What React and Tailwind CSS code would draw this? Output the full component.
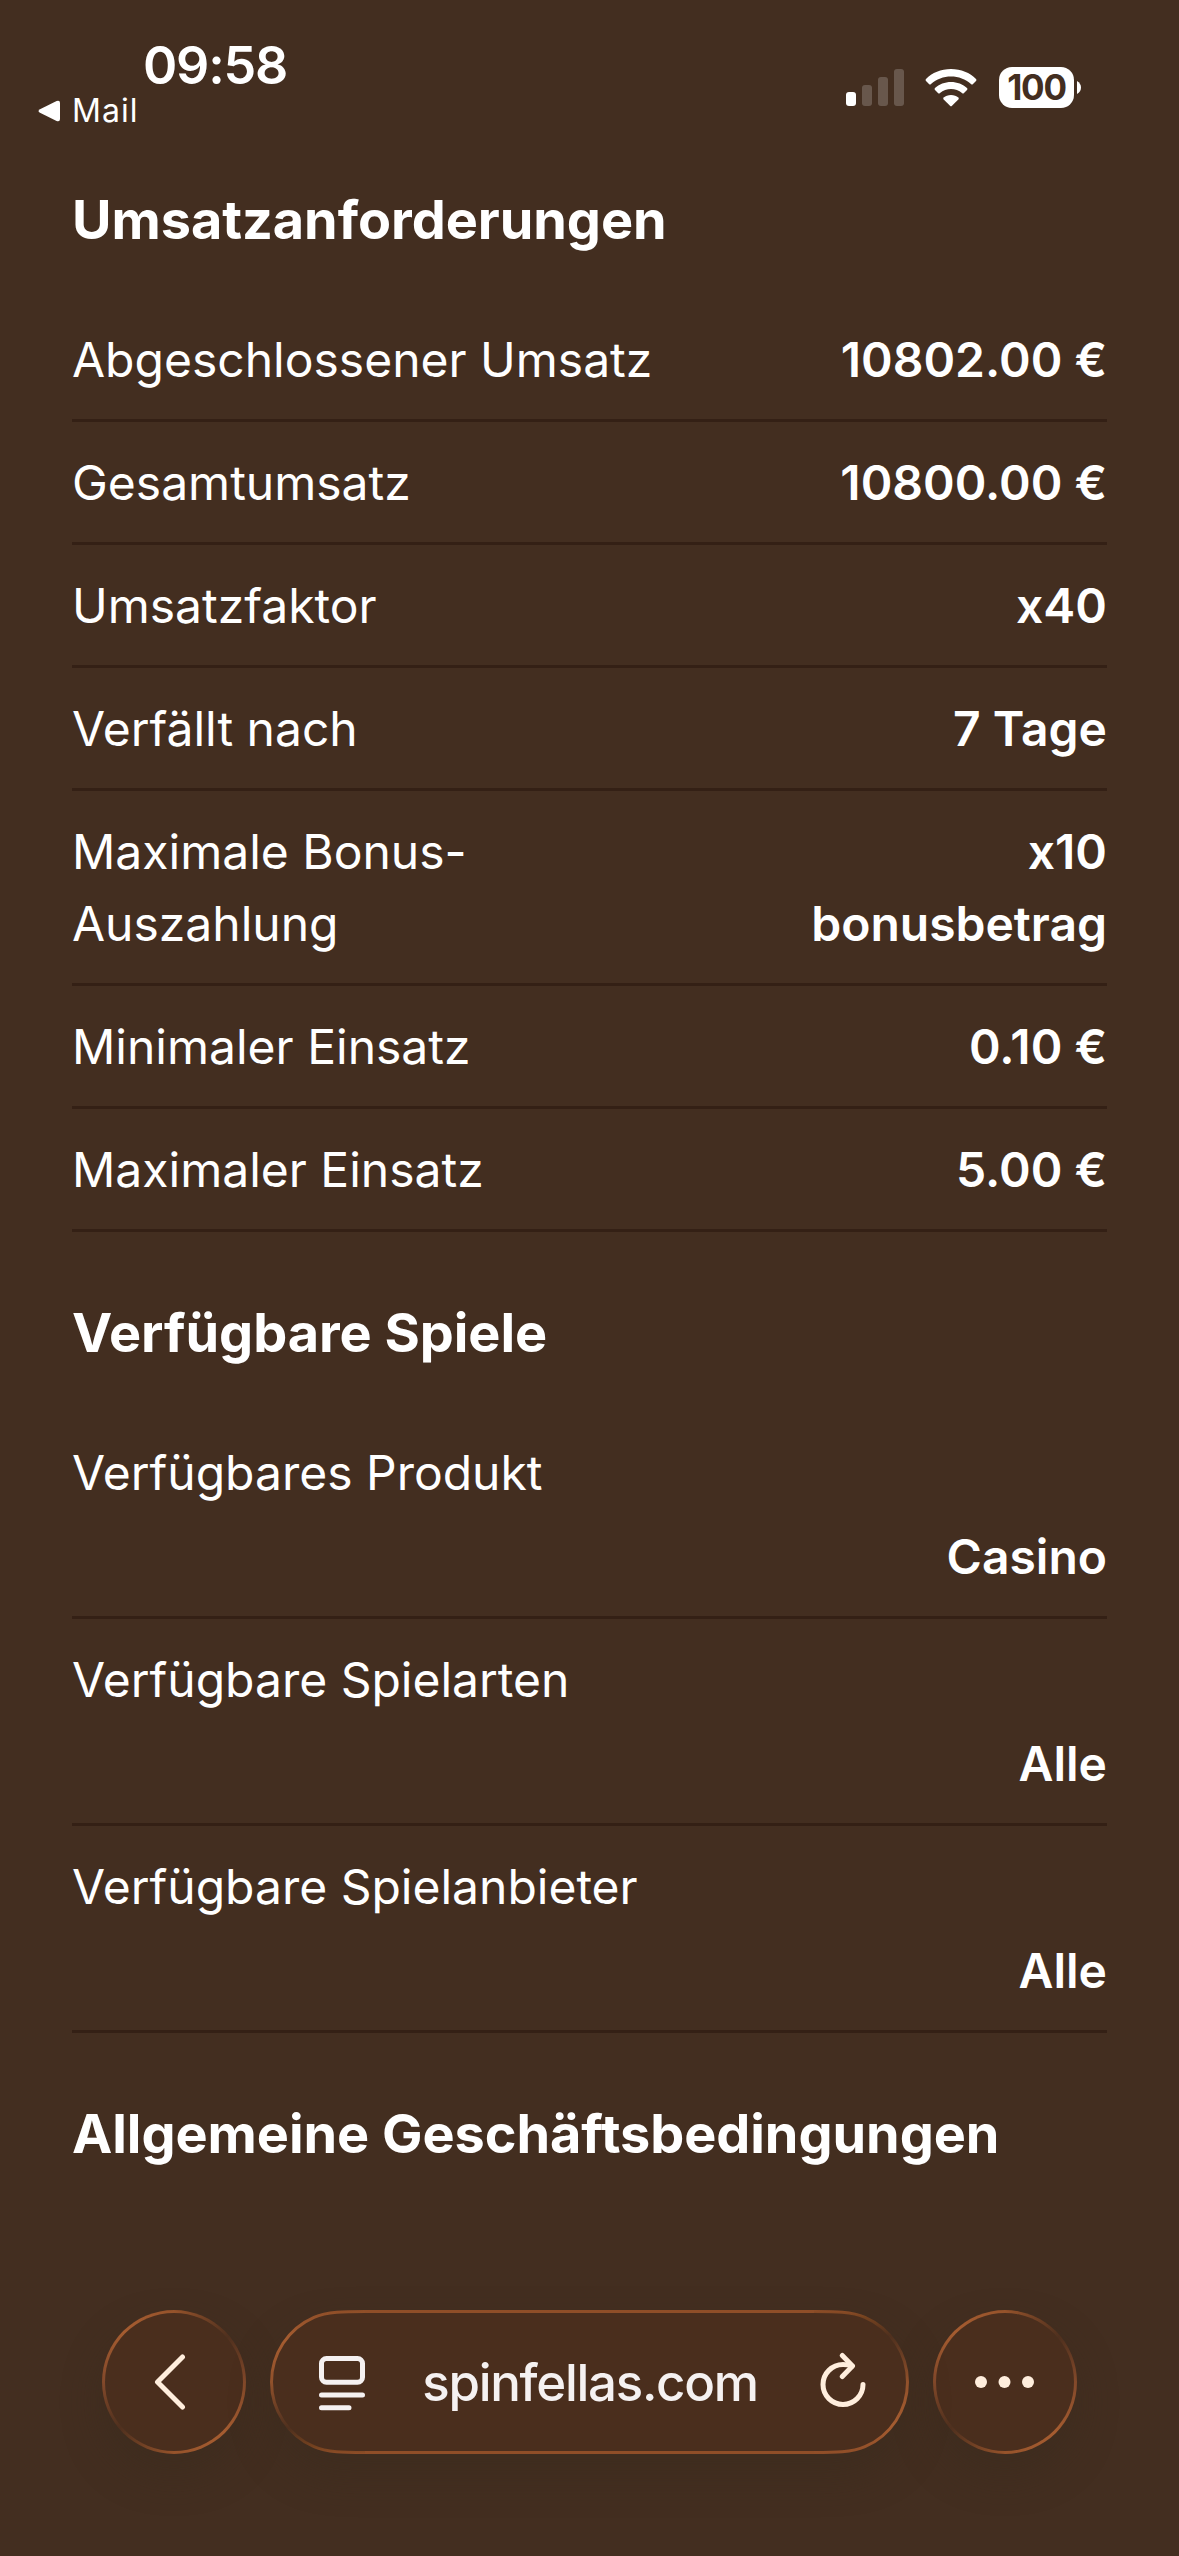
import clsx from 'clsx';

const wagering = [
  { label: 'Abgeschlossener Umsatz', value: '10802.00 €' },
  { label: 'Gesamtumsatz', value: '10800.00 €' },
  { label: 'Umsatzfaktor', value: 'x40' },
  { label: 'Verfällt nach', value: '7 Tage' },
  { label: 'Maximale Bonus-Auszahlung', value: 'x10 bonusbetrag' },
  { label: 'Minimaler Einsatz', value: '0.10 €' },
  { label: 'Maximaler Einsatz', value: '5.00 €' },
];

const games = [
  { label: 'Verfügbares Produkt', value: 'Casino' },
  { label: 'Verfügbare Spielarten', value: 'Alle' },
  { label: 'Verfügbare Spielanbieter', value: 'Alle' },
];

const StatusBar = () => (
  <header className="flex h-[119px] justify-between pl-[38px] pr-[98px]">
    <div className="flex flex-col pt-[36px]">
      <span className="pl-[105px] text-[52px] leading-[60px] font-semibold tracking-[-1.2px]">09:58</span>
      <span className="-mt-[2px] flex items-center gap-[12px] text-[32px] leading-[34px] tracking-[1px]">
        <svg className="h-[22px] w-[22px]" viewBox="0 0 22 22" fill="currentColor">
          <path d="M2 9.2 18.600 1.100Q22 0 22 3V19Q22 22 18.600 20.900L2 12.800Q-1 11 2 9.200Z" />
        </svg>
        Mail
      </span>
    </div>
    <div className="flex items-start pt-[67px]">
      <svg className="mt-[2px] h-[38px] w-[59px]" viewBox="0 0 59 38" fill="currentColor">
        <rect x="0" y="23" width="10" height="14" rx="3" />
        <rect x="16" y="16" width="10" height="21" rx="3" opacity="0.2" />
        <rect x="32" y="8" width="10" height="29" rx="3" opacity="0.2" />
        <rect x="48" y="0" width="10" height="37" rx="3" opacity="0.2" />
      </svg>
      <svg className="mt-[2px] ml-[20px] h-[38px] w-[52px]" viewBox="0 0 52 38" fill="currentColor">
        <path d="M26 0C36 0 45 3.800 51 10Q52 11 51 12L48 15Q47 16 46 15C40.500 10 33.500 7.500 26 7.500S11.500 10 6 15Q5 16 4 15L1 12Q0 11 1 10C7 3.800 16 0 26 0Z" />
        <path d="M26 13C32 13 38 15.300 42 19Q43 20 42 21L39 24Q38 25 37 24C34 21.500 30 20 26 20S18 21.500 15 24Q14 25 13 24L10 21Q9 20 10 19C14 15.300 20 13 26 13Z" />
        <path d="M26 26C29 26 31.500 27 33.300 28.500Q34.300 29.500 33.300 30.500L27 36.800Q26 37.800 25 36.800L18.700 30.500Q17.700 29.500 18.700 28.500C20.500 27 23 26 26 26Z" />
      </svg>
      <div className="ml-[22px] flex h-[41px] w-[75px] items-center justify-center rounded-[13px] bg-white text-[35px] font-bold tracking-[-1.2px] text-[#432e20]">
        100
      </div>
      <svg className="mt-[14px] ml-[3px] h-[13px] w-[4px]" viewBox="0 0 4 13" fill="currentColor">
        <path d="M0 0Q4 2.500 4 6.500T0 13Z" />
      </svg>
    </div>
  </header>
);

const Heading = ({ children }) => (
  <h2 className="pt-[61px] pb-[39px] text-[54px] leading-[80px] font-bold tracking-[-0.05px]">{children}</h2>
);

const Row = ({ label, value, stacked }) => (
  <div
    className={clsx(
      'flex border-b-3 border-[#342015] pt-[25px] pb-[23px] text-5xl leading-[72px]',
      stacked ? 'flex-col gap-3' : 'justify-between',
    )}
  >
    <span className={clsx(!stacked && 'max-w-[600px]')}>{label}</span>
    <span className={clsx('text-right font-semibold', !stacked && 'max-w-[340px]')}>{value}</span>
  </div>
);

const RoundButton = ({ children }) => (
  <button className="flex h-[144px] w-[144px] items-center justify-center rounded-full border-3 border-transparent shadow-[0_20px_36px_rgba(58,44,30,0.5)] [background:linear-gradient(#4a2e1d,#4a2e1d)_padding-box,conic-gradient(#96532b,#4f301e_50deg,#83492a_90deg,#a55c30_135deg,#96532b_180deg,#4f301e_230deg,#83492a_270deg,#a55c30_315deg,#96532b)_border-box]">
    {children}
  </button>
);

// pill outline with light catching the top-left and bottom-right corners
const PillOutline = () => (
  <svg className="absolute inset-0 h-[144px] w-[639px]" viewBox="0 0 639 144" fill="none" strokeWidth="3">
    <defs>
      <linearGradient id="edge-left" gradientUnits="userSpaceOnUse" x1="0" y1="0" x2="0" y2="144">
        <stop offset="0" stopColor="#8f4e28" />
        <stop offset="0.2" stopColor="#a55c30" />
        <stop offset="0.5" stopColor="#91512b" />
        <stop offset="0.82" stopColor="#4f301e" />
        <stop offset="0.95" stopColor="#75421f" />
        <stop offset="1" stopColor="#8f4e28" />
      </linearGradient>
      <linearGradient id="edge-right" gradientUnits="userSpaceOnUse" x1="0" y1="144" x2="0" y2="0">
        <stop offset="0" stopColor="#8f4e28" />
        <stop offset="0.2" stopColor="#a55c30" />
        <stop offset="0.5" stopColor="#91512b" />
        <stop offset="0.82" stopColor="#4f301e" />
        <stop offset="0.95" stopColor="#75421f" />
        <stop offset="1" stopColor="#8f4e28" />
      </linearGradient>
    </defs>
    <path
      d="M95 1.500C75 1.500 57 1.500 44 7.300A70.500 70.500 0 0 0 44 136.700C57 142.500 75 142.500 95 142.500H544C564 142.500 582 142.500 595 136.700A70.500 70.500 0 0 0 595 7.300C582 1.500 564 1.500 544 1.500Z"
      fill="#4a2e1d"
    />
    <path d="M95 1.500H544M95 142.500H544" stroke="#8f4e28" />
    <path d="M95 1.500C75 1.500 57 1.500 44 7.300A70.500 70.500 0 0 0 44 136.700C57 142.500 75 142.500 95 142.500" stroke="url(#edge-left)" />
    <path d="M544 142.500C564 142.500 582 142.500 595 136.700A70.500 70.500 0 0 0 595 7.300C582 1.500 564 1.500 544 1.500" stroke="url(#edge-right)" />
  </svg>
);

const AddressBar = () => (
  <div className="relative flex h-[144px] grow items-center rounded-[72px] pr-[43px] pl-[49px] shadow-[0_20px_36px_rgba(58,44,30,0.5)]">
    <PillOutline />
    <svg className="relative mt-[2px] h-[56px] w-[48px] text-[#f5f1f1]" viewBox="0 0 48 56" fill="none" stroke="currentColor" strokeWidth="5" strokeLinecap="round">
      <rect x="2.500" y="3.500" width="41" height="23.700" rx="5" />
      <path d="M2.500 40H43.500M2.500 52.700H30" />
    </svg>
    <span className="relative grow pt-[2px] pr-[7px] text-center text-[51px] leading-[60px] font-medium tracking-[-1.300px] text-[#f5f1f1]">
      spinfellas.com
    </span>
    <svg className="relative h-[60px] w-[46px]" viewBox="0 0 46 60" fill="none" stroke="currentColor" strokeWidth="5" strokeLinecap="round" strokeLinejoin="round">
      <path d="M43 32.500A20 20 0 1 1 23 12.500Q28 12.500 32 14" />
      <path d="M22.300 3.500 32.500 14 22.300 24.500" />
    </svg>
  </div>
);

const BrowserBar = () => (
  <nav className="mt-[97px] flex gap-6 px-[102px] text-[#ffeedd]">
    <RoundButton>
      <svg className="mr-[9px] h-[56px] w-[32px]" viewBox="0 0 32 56" fill="none" stroke="currentColor" strokeWidth="5" strokeLinecap="round" strokeLinejoin="round">
        <path d="M28.500 3 3.500 28 28.500 53" />
      </svg>
    </RoundButton>
    <AddressBar />
    <RoundButton>
      <svg className="mr-[2px] h-[12px] w-[59px]" viewBox="0 0 59 12" fill="currentColor">
        <circle cx="6" cy="6" r="6" />
        <circle cx="29.500" cy="6" r="6" />
        <circle cx="53" cy="6" r="6" />
      </svg>
    </RoundButton>
  </nav>
);

const App = () => {
  return (
    <div className="h-[2556px] w-[1179px] overflow-hidden bg-[#432e20] font-['Inter',sans-serif] text-white">
      <StatusBar />
      <main className="px-[72px]">
        <Heading>Umsatzanforderungen</Heading>
        {wagering.map((row) => (
          <Row key={row.label} {...row} />
        ))}
        <Heading>Verfügbare Spiele</Heading>
        {games.map((row) => (
          <Row key={row.label} {...row} stacked />
        ))}
        <Heading>Allgemeine Geschäftsbedingungen</Heading>
      </main>
      <BrowserBar />
    </div>
  );
};

export default App;
